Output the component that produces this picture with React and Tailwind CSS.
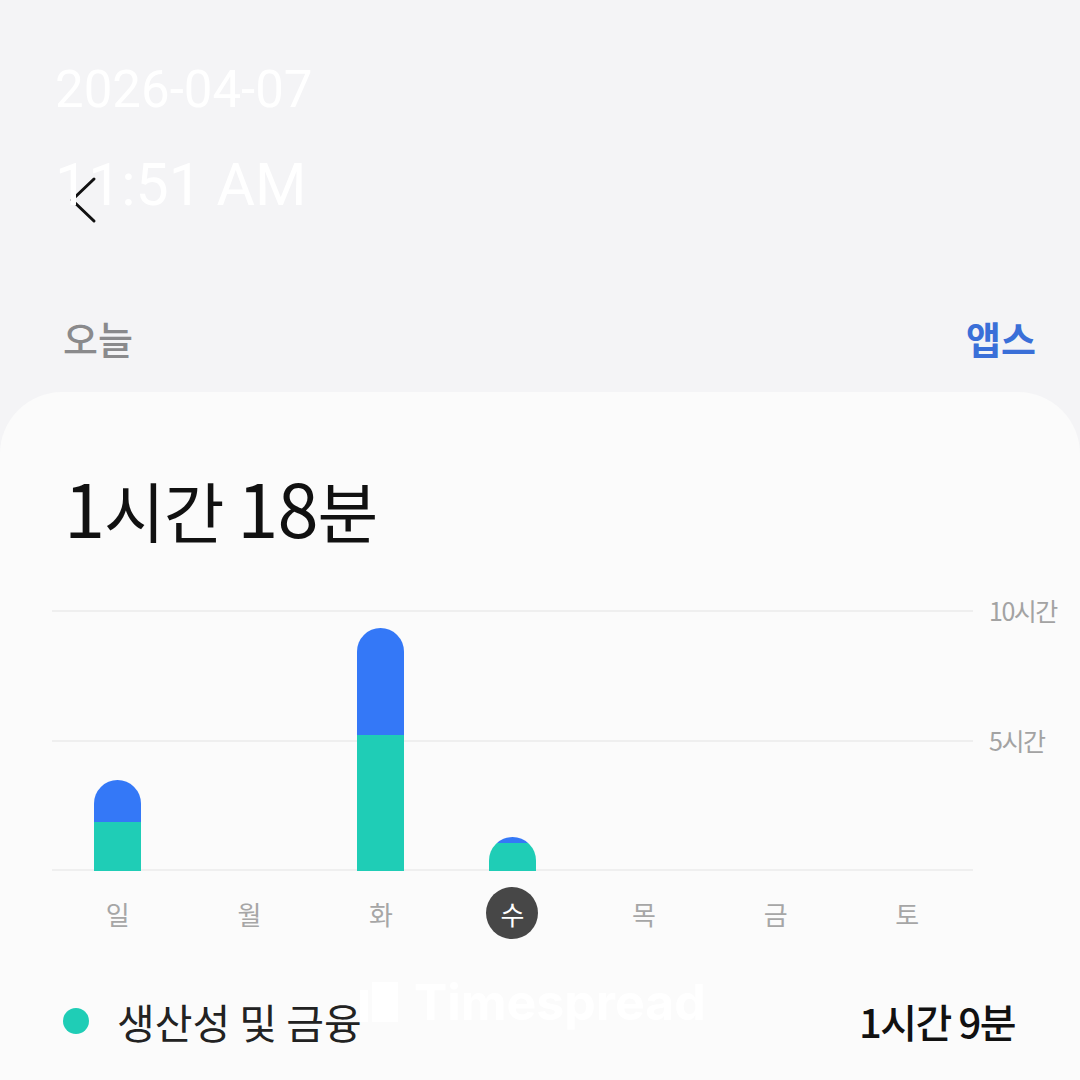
const days = [
  { label: "일", total: 91, teal: 49 },
  { label: "월", total: 0, teal: 0 },
  { label: "화", total: 243, teal: 136 },
  { label: "수", total: 34, teal: 28, active: true },
  { label: "목", total: 0, teal: 0 },
  { label: "금", total: 0, teal: 0 },
  { label: "토", total: 0, teal: 0 },
];

const font = { fontFamily: '"Noto Sans CJK KR", "Noto Sans", sans-serif' };

function Bar({ total, teal }) {
  if (!total) return null;
  return (
    <div
      className="w-[47px] rounded-t-full overflow-hidden flex flex-col"
      style={{ height: total }}
    >
      <div className="flex-1 bg-[#3478f7]" />
      <div className="bg-[#1fcdb6]" style={{ height: teal }} />
    </div>
  );
}

export default function App() {
  return (
    <div
      className="relative w-[1080px] h-[1080px] bg-[#f4f4f6] overflow-hidden flex flex-col"
      style={font}
    >
      {/* clock overlay */}
      <div className="absolute left-[55px] top-[64px] text-white font-[Roboto] leading-none pointer-events-none">
        <div className="text-[51px]">2026-04-07</div>
        <div className="text-[59px] mt-[40px]">11:51 AM</div>
      </div>

      <div className="h-[318px] pt-[176px] pl-[68px]">
        <svg width="30" height="48" viewBox="0 0 30 48" fill="none">
          <path d="M26 3 L4 24 L26 45" stroke="#111" strokeWidth="3" strokeLinecap="round" strokeLinejoin="round" />
        </svg>
      </div>

      <div className="h-[40px] pl-[63px] pr-[44px] flex items-center justify-between text-[38px] leading-none">
        <span className="text-[#8a8a8c] font-medium">오늘</span>
        <span className="text-[#3a6fd8] font-semibold">앱스</span>
      </div>

      <div className="mt-[34px] flex-1 bg-[#fbfbfb] rounded-t-[62px] px-[52px] pt-[74px]">
        <div className="h-[80px] leading-[80px] pl-[12px] text-[#111] text-[66px] tracking-[-1px]">
          <span className="text-[74px]">1</span>시간 <span className="text-[74px]">18</span>분
        </div>

        <div className="relative mt-[64px] w-[921px] h-[261px]">
          <div className="absolute left-0 right-0 top-0 border-t-2 border-[#efefef]" />
          <div className="absolute left-0 right-0 top-[130px] border-t-2 border-[#efefef]" />
          <div className="absolute left-0 right-0 bottom-0 border-t-2 border-[#efefef]" />
          <div className="absolute left-[937px] top-[-16px] whitespace-nowrap text-[25px] leading-[32px] text-[#a3a3a3] tracking-[-1.5px]">
            10시간
          </div>
          <div className="absolute left-[937px] top-[114px] whitespace-nowrap text-[25px] leading-[32px] text-[#a3a3a3] tracking-[-1.5px]">
            5시간
          </div>
          <div className="relative grid grid-cols-7 h-full items-end">
            {days.map((d) => (
              <div key={d.label} className="flex justify-center items-end h-full">
                <Bar total={d.total} teal={d.teal} />
              </div>
            ))}
          </div>
        </div>

        <div className="mt-[16px] w-[921px] grid grid-cols-7 h-[52px]">
          {days.map((d) => (
            <div key={d.label} className="flex justify-center items-center">
              {d.active ? (
                <span className="w-[52px] h-[52px] rounded-full bg-[#474747] text-white text-[26px] flex items-center justify-center">
                  {d.label}
                </span>
              ) : (
                <span className="text-[26px] text-[#a6a6a6]">{d.label}</span>
              )}
            </div>
          ))}
        </div>

        <div className="relative mt-[62px] h-[40px] pl-[11px] pr-[13px] flex items-center justify-between">
          <div className="flex items-center">
            <span className="w-[26px] h-[26px] rounded-full bg-[#1fcdb6]" />
            <span className="ml-[28px] text-[41px] text-[#222] leading-none">생산성 및 금융</span>
          </div>
          <span className="text-[40px] text-[#111] font-medium leading-none tracking-[-1.5px]">1시간 9분</span>

          {/* watermark */}
          <div className="absolute left-[308px] top-[-24px] flex items-center gap-[16px] text-white pointer-events-none">
            <div className="flex items-end gap-[4px] h-[40px]">
              <span className="w-[8px] h-[32px] bg-white" />
              <span className="w-[26px] h-[40px] bg-white" />
            </div>
            <span className="text-[50px] font-bold leading-none" style={{ fontFamily: "Inter, sans-serif" }}>
              Timespread
            </span>
          </div>
        </div>
      </div>
    </div>
  );
}
